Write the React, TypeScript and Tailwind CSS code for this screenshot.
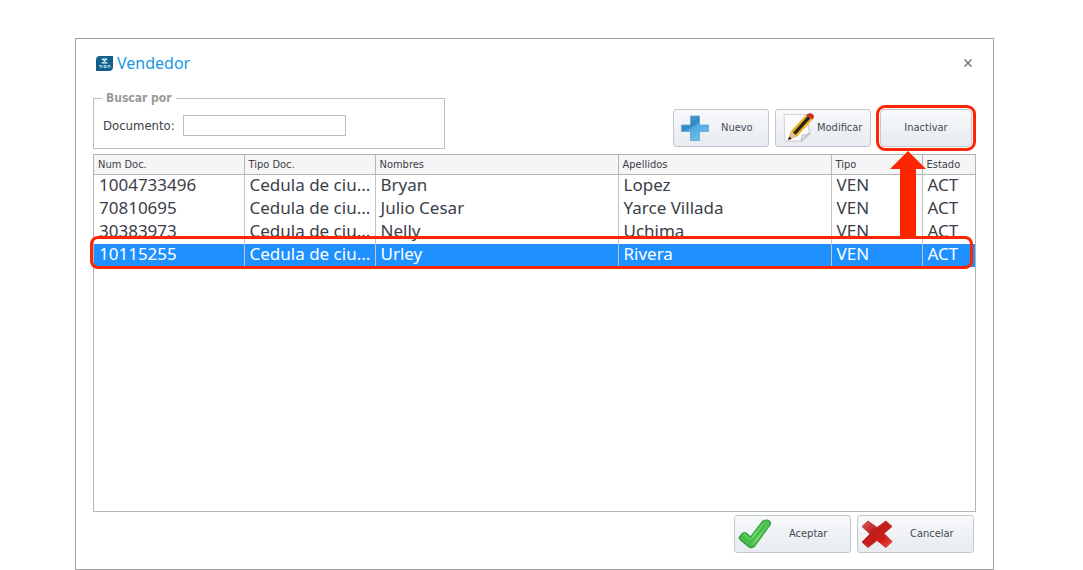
import React from "react";

type Row = { doc: string; tipoDoc: string; nombres: string; apellidos: string; tipo: string; estado: string };

const rows: Row[] = [
  { doc: "1004733496", tipoDoc: "Cedula de ciu...", nombres: "Bryan", apellidos: "Lopez", tipo: "VEN", estado: "ACT" },
  { doc: "70810695", tipoDoc: "Cedula de ciu...", nombres: "Julio Cesar", apellidos: "Yarce Villada", tipo: "VEN", estado: "ACT" },
  { doc: "30383973", tipoDoc: "Cedula de ciu...", nombres: "Nelly", apellidos: "Uchima", tipo: "VEN", estado: "ACT" },
  { doc: "10115255", tipoDoc: "Cedula de ciu...", nombres: "Urley", apellidos: "Rivera", tipo: "VEN", estado: "ACT" },
];
const selected = "10115255";
const headers = ["Num Doc.", "Tipo Doc.", "Nombres", "Apellidos", "Tipo", "Estado"];

function LogoIcon() {
  return (
    <svg viewBox="0 0 17 15" className="h-[15px] w-[17px]" aria-hidden="true">
      <path d="M4 0H17V11Q17 15 13 15H0V4Q0 0 4 0Z" fill="#12608f" />
      <path d="M5.500 3H11.500M5.500 7H11.500M6.500 3L10.500 7M10.500 3L6.500 7" stroke="#e6f1f7" strokeWidth="1.100" />
      <path d="M3 9.500H5L4 11.500M6 9.500V12M8 9.500H10V11.500H8ZM12 12V9.500H14V11.500" fill="none" stroke="#b9d6e6" strokeWidth="1" />
    </svg>
  );
}

function PlusIcon() {
  return (
    <svg viewBox="0 0 28 26" className="h-[26px] w-[28px] shrink-0" aria-hidden="true">
      <defs>
        <linearGradient id="plus" x1="0" y1="0" x2=".6" y2="1">
          <stop offset="0" stopColor="#5b9fc8" />
          <stop offset=".45" stopColor="#3387c4" />
          <stop offset=".55" stopColor="#4fabdf" />
          <stop offset="1" stopColor="#6fc0ea" />
        </linearGradient>
      </defs>
      <path d="M9.500 1h9v9h9v6.500h-9v9h-9v-9h-9v-6.500h9z" fill="url(#plus)" stroke="#5ba3cf" strokeWidth=".8" />
    </svg>
  );
}

function EditIcon() {
  return (
    <svg viewBox="0 0 32 30" className="h-[30px] w-[32px] shrink-0" aria-hidden="true">
      <path d="M1 2H24L28 20Q25 26 18 29H2Z" fill="#dcdcdc" />
      <path d="M1 1.500H23L26.500 20L18 28H2Z" fill="#fbfbfb" stroke="#c9c9c9" strokeWidth=".7" />
      <path d="M18 28L19.500 22Q24 22.500 26.500 20Z" fill="#e6e6e6" stroke="#a0a0a0" strokeWidth=".7" />
      <path d="M5 27L8 18L23 2L29.500 6.500L14 23.500Z" fill="#e8ae22" />
      <path d="M10 19.700L24.700 3.200L27.500 5.200L12.500 21.800Z" fill="#29231c" />
      <path d="M5 27L8 18L14 23.500Z" fill="#dcc08a" />
      <path d="M5 27L6.200 23.500L8.800 25.700Z" fill="#1c1c1c" />
      <path d="M23 2L25 .8Q28-.5 30 1.500Q31.500 3 30.500 5L29.500 6.500Z" fill="#d02a25" />
    </svg>
  );
}

function CheckIcon() {
  return (
    <svg viewBox="0 0 34 30" className="h-[30px] w-[34px] shrink-0" aria-hidden="true">
      <defs>
        <linearGradient id="check" x1="1" y1="0" x2="0" y2="1">
          <stop offset="0" stopColor="#4bb955" />
          <stop offset=".55" stopColor="#6fdb68" />
          <stop offset="1" stopColor="#25a52e" />
        </linearGradient>
      </defs>
      <path d="M2 19L6 15.500L12.500 19.500L26 2.500Q30 0 33.500 4L16.500 28Q14 30.500 10.500 28.500Z" fill="#000" opacity=".15" />
      <path d="M1.500 18L5 14Q6.500 13 8 14L12.500 18L24.500 2.500Q26 .8 29 1Q33.500 1.800 32 6L16.500 27Q14 29.500 11 28L2 20.500Q.8 19 1.500 18Z" fill="url(#check)" stroke="#329c3c" strokeWidth="1.200" />
      <path d="M5 17.500L12.500 24L28 5" fill="none" stroke="#45bb4a" strokeWidth="2" />
    </svg>
  );
}

function CrossIcon() {
  return (
    <svg viewBox="0 0 32 28" className="h-[28px] w-[32px] shrink-0" aria-hidden="true">
      <defs>
        <linearGradient id="cross" x1="0" y1="0" x2="1" y2="1">
          <stop offset="0" stopColor="#d9605c" />
          <stop offset=".4" stopColor="#c01b18" />
          <stop offset=".7" stopColor="#cf1f1b" />
          <stop offset="1" stopColor="#ff4b40" />
        </linearGradient>
      </defs>
      <path d="M1 6.500L7 1L16 7.500L25 1L31 6.500L23 13.500L31 21.500L25 27.500L16 20.500L7 27.500L1 22L9 14Z" fill="url(#cross)" stroke="#b93a37" strokeWidth="1" strokeLinejoin="round" />
    </svg>
  );
}

const button =
  "flex h-[38px] items-center border border-[#c3c8cf] bg-linear-to-b from-[#f7f9fb] to-[#e8ebef] text-[11px] text-[#454a55]";

export default function App() {
  return (
    <div className="flex min-h-screen flex-col bg-white pt-[38px] pr-[89px] pl-[75px] font-['DejaVu_Sans_Condensed','DejaVu_Sans',sans-serif] text-[#3c4048]">
      <main className="flex flex-1 flex-col border border-[#a0a0a0] px-[17px] pb-4">
        <header className="flex h-[48px] items-center gap-1 pl-[3px]">
          <LogoIcon />
          <h1 className="flex-1 font-['Noto_Sans',sans-serif] text-[16px] text-[#1b97e3]">Vendedor</h1>
          <button type="button" aria-label="Cerrar" className="flex h-4 w-4 items-center justify-center">
            <svg viewBox="0 0 8 8" className="h-2 w-2" aria-hidden="true">
              <path d="M.5 .5L7.500 7.500M7.500 .5L.5 7.500" stroke="#777" strokeWidth="1.500" />
            </svg>
          </button>
        </header>

        <div className="flex items-start justify-between pt-[3px]">
          <fieldset className="h-[59px] w-[352px] border border-[#bdbdbd] px-2">
            <legend className="px-1 text-[12px] leading-4 font-bold text-[#9a9a9a]">Buscar por</legend>
            <div className="flex items-center gap-2 pt-[9px] pl-px">
              <label htmlFor="documento" className="text-[13px]">Documento:</label>
              <input id="documento" className="h-[21px] w-[163px] border border-[#bdbdbd] bg-white px-1 text-[13px] outline-none" />
            </div>
          </fieldset>
          <div className="flex items-center gap-1.5 pt-[19px] pr-1">
            <button type="button" className={`${button} w-24 gap-3 rounded-[3px] pl-[7px]`}><PlusIcon />Nuevo</button>
            <button type="button" className={`${button} w-24 gap-0.5 rounded-[3px] pl-[7px]`}><EditIcon />Modificar</button>
            <button type="button" className={`${button} ml-[3px] w-[92px] justify-center rounded-[5px] outline-3 outline-offset-1 outline-[#fe2600]`}>Inactivar</button>
          </div>
        </div>

        <div className="relative mt-[5px] flex-1 border border-[#b5b5b5]">
          <table className="w-full table-fixed border-collapse text-left">
            <colgroup>
              <col className="w-[150px]" /><col className="w-[131px]" /><col /><col className="w-[213px]" /><col className="w-[91px]" /><col className="w-[53px]" />
            </colgroup>
            <thead className="bg-[#f5f5f5] text-[11px] leading-[19px]">
              <tr>
                {headers.map((h) => (
                  <th key={h} className="border-r border-b border-[#b5b5b5] pl-1 font-normal last:border-r-0">{h}</th>
                ))}
              </tr>
            </thead>
            <tbody className="font-['Noto_Sans',sans-serif] text-[17px] leading-5">
              {rows.map((r) => (
                <tr key={r.doc} className={r.doc === selected ? "bg-[#1e90ff] text-white" : ""}>
                  {[r.doc, r.tipoDoc, r.nombres, r.apellidos, r.tipo, r.estado].map((v, i) => (
                    <td key={i} className="border-r border-[#c4c4c4] pb-[3px] pl-[5px] whitespace-nowrap last:border-r-0">{v}</td>
                  ))}
                </tr>
              ))}
            </tbody>
          </table>
          <svg viewBox="0 0 36 88" className="absolute -top-1 right-[49px] h-[88px] w-9" aria-hidden="true">
            <path d="M18 0L36 18H26V88H10V18H0Z" fill="#fe2600" />
          </svg>
          <div className="absolute top-[81px] right-0.5 -left-1 h-[33px] rounded-lg border-3 border-[#fe2600]" />
        </div>

        <div className="flex justify-end gap-1.5 pt-[3px] pr-[2px]">
          <button type="button" className={`${button} w-[117px] gap-[17px] rounded-[3px] pl-[3px]`}><CheckIcon />Aceptar</button>
          <button type="button" className={`${button} w-[117px] gap-[17px] rounded-[3px] pl-[3px]`}><CrossIcon />Cancelar</button>
        </div>
      </main>
    </div>
  );
}
